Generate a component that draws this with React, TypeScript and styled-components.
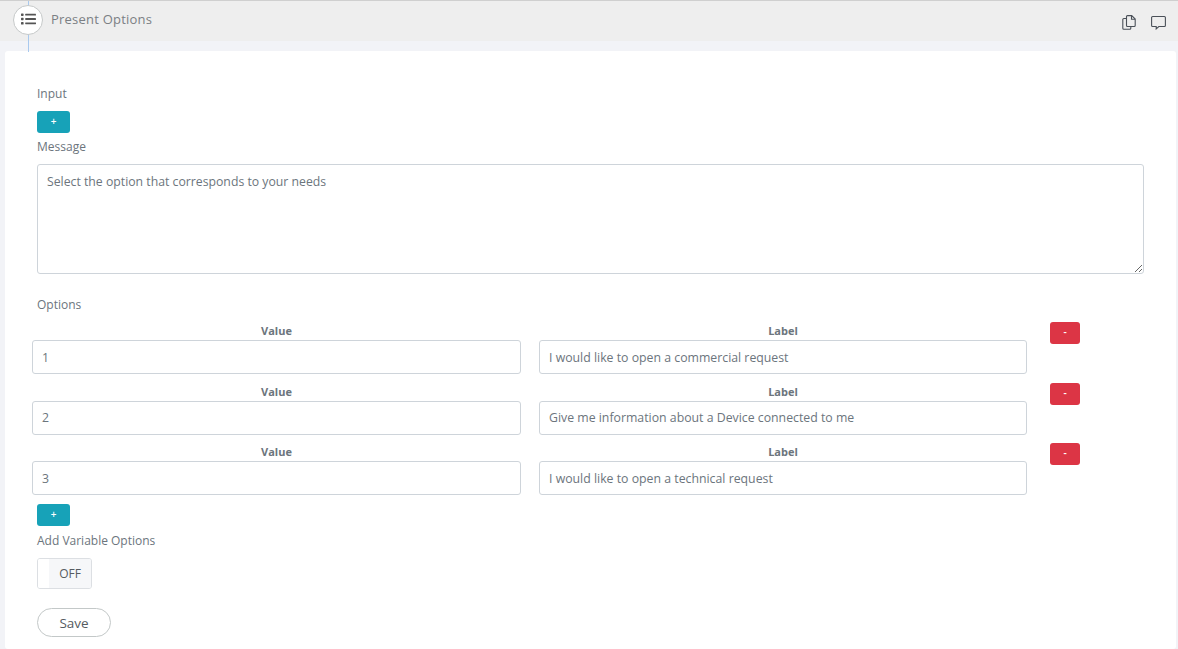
import React from "react";
import styled, { createGlobalStyle } from "styled-components";

const GlobalStyle = createGlobalStyle`
    html, body {
        margin: 0;
        height: 100%;
        overflow: hidden;
        background: #f2f3f7;
        font-family: "Open Sans", "Noto Sans", sans-serif;
        color: #6c757d;
    }
`;

const Header = styled.header`
    position: relative;
    height: 41px;
    box-sizing: border-box;
    border-top: 1px solid #cfcfcf;
    background: #eeeeee;
    display: flex;
    align-items: center;
    padding: 0 12px 5px 51px;
`;

const TimelineLine = styled.div`
    position: absolute;
    left: 28px;
    top: 0;
    width: 1px;
    height: 51px;
    background: #a9c9ee;
`;

const IconCircle = styled.div`
    position: absolute;
    left: 13px;
    top: 4px;
    width: 30px;
    height: 30px;
    box-sizing: border-box;
    padding-bottom: 2px;
    border-radius: 50%;
    border: 1.5px solid #c6c9c9;
    background: #fff;
    display: flex;
    align-items: center;
    justify-content: center;
    color: #555;
`;

const Title = styled.span`
    flex: 1;
    font-size: 13px;
    letter-spacing: 0.22px;
    color: #7b7f84;
`;

const HeaderIcons = styled.div`
    display: flex;
    align-items: center;
    gap: 15px;
    padding-top: 7px;
    color: #4a5058;
`;

const Card = styled.main`
    margin: 10px 2px 0 5px;
    padding: 34px 32px 0;
    background: #fff;
    border-radius: 3px;
    height: 598px;
    box-sizing: border-box;
`;

const FieldLabel = styled.div`
    font-size: 12px;
    line-height: 18px;
    color: #6c757d;
`;

const MessageLabel = styled(FieldLabel)`
    margin-top: 5px;
`;

const AddButton = styled.button<{ $top: number }>`
    display: flex;
    align-items: center;
    justify-content: center;
    width: 33px;
    height: 22px;
    margin-top: ${p => p.$top}px;
    padding: 0 0 2px;
    border: 0;
    border-radius: 3px;
    background: #17a2b8;
    color: #fff;
    font: 600 10px "Open Sans", sans-serif;
`;

const MessageBox = styled.textarea`
    display: block;
    width: 1107px;
    height: 110px;
    margin-top: 8px;
    padding: 8px 9px;
    box-sizing: border-box;
    border: 1px solid #ced4da;
    border-radius: 3px;
    background: #fff;
    color: #6c757d;
    font: 12.25px/18px "Open Sans", sans-serif;
    outline: none;
`;

const OptionsLabel = styled(FieldLabel)`
    margin-top: 22px;
`;

const OptionRows = styled.div`
    margin: 7px 0 0 -5px;
    display: flex;
    flex-direction: column;
    gap: 0.5px;
`;

const OptionRow = styled.div`
    display: grid;
    grid-template-columns: 489px 488px 30px;
    column-gap: 18px;
    height: 60px;
`;

const Column = styled.div`
    display: flex;
    flex-direction: column;
`;

const ColumnTitle = styled.div`
    height: 19px;
    padding-top: 2px;
    box-sizing: border-box;
    text-align: center;
    font-size: 11px;
    font-weight: 700;
    line-height: 16px;
    color: #6c757d;
`;

const TextField = styled.div`
    height: 34px;
    box-sizing: border-box;
    border: 1px solid #ced4da;
    border-radius: 3px;
    padding: 0 9px;
    display: flex;
    align-items: center;
    font-size: 12.3px;
    color: #6c757d;
`;

const RemoveButton = styled.button`
    width: 30px;
    height: 22px;
    margin: 1px 0 0 5px;
    padding: 0 0 2px;
    border: 0;
    border-radius: 3px;
    background: #dc3545;
    color: #fff;
    font: 600 10px "Open Sans", sans-serif;
`;

const VariableLabel = styled(FieldLabel)`
    margin-top: 6px;
`;

const Toggle = styled.div`
    display: flex;
    width: 55px;
    height: 31px;
    margin-top: 8px;
    box-sizing: border-box;
    border: 1px solid #dcdfe3;
    border-radius: 3px;
    overflow: hidden;
`;

const ToggleHandle = styled.div`
    width: 11px;
    background: #fff;
`;

const ToggleState = styled.div`
    flex: 1;
    display: flex;
    align-items: center;
    justify-content: center;
    background: #f6f7f9;
    font-size: 12px;
    color: #555b61;
`;

const SaveButton = styled.button`
    display: block;
    width: 74px;
    height: 29px;
    margin-top: 19px;
    border: 1px solid #c3c8c8;
    border-radius: 15px;
    background: #fff;
    color: #555b61;
    font: 13.5px "Open Sans", sans-serif;
`;

const options = [
    { value: "1", label: "I would like to open a commercial request" },
    { value: "2", label: "Give me information about a Device connected to me" },
    { value: "3", label: "I would like to open a technical request" },
];

export default function App() {
    return (
        <>
            <GlobalStyle />
            <Header>
                <TimelineLine />
                <IconCircle>
                    <svg width="15" height="12" viewBox="0 0 15 12" fill="currentColor">
                        <rect x="0" y="0.5" width="2.6" height="2.4" rx="0.6" />
                        <rect x="0" y="4.8" width="2.6" height="2.4" rx="0.6" />
                        <rect x="0" y="9.1" width="2.6" height="2.4" rx="0.6" />
                        <rect x="4.2" y="0.8" width="10.8" height="1.8" rx="0.4" />
                        <rect x="4.2" y="5.1" width="10.8" height="1.8" rx="0.4" />
                        <rect x="4.2" y="9.4" width="10.8" height="1.8" rx="0.4" />
                    </svg>
                </IconCircle>
                <Title>Present Options</Title>
                <HeaderIcons>
                    <svg width="14" height="15" viewBox="0 0 14 15" fill="none" stroke="currentColor" strokeWidth="1.1">
                        <path d="M4.5 3.5H1.8a1 1 0 0 0-1 1v8.7a1 1 0 0 0 1 1h6a1 1 0 0 0 1-1v-1.7" />
                        <path d="M4.5 1.6a1 1 0 0 1 1-1h4.2l3.5 3.5v6.4a1 1 0 0 1-1 1H5.5a1 1 0 0 1-1-1z" />
                        <path d="M9.5 0.8v3.5h3.5" />
                    </svg>
                    <svg width="15" height="15" viewBox="0 0 15 15" fill="none" stroke="currentColor" strokeWidth="1.1">
                        <path d="M1.6 1.5h11.8a1 1 0 0 1 1 1v8a1 1 0 0 1-1 1H7.8l-2.6 2.4v-2.4H1.6a1 1 0 0 1-1-1v-8a1 1 0 0 1 1-1z" />
                    </svg>
                </HeaderIcons>
            </Header>
            <Card>
                <FieldLabel>Input</FieldLabel>
                <AddButton $top={8}>+</AddButton>
                <MessageLabel>Message</MessageLabel>
                <MessageBox readOnly defaultValue="Select the option that corresponds to your needs" />
                <OptionsLabel>Options</OptionsLabel>
                <OptionRows>
                    {options.map(o => (
                        <OptionRow key={o.value}>
                            <Column>
                                <ColumnTitle>Value</ColumnTitle>
                                <TextField>{o.value}</TextField>
                            </Column>
                            <Column>
                                <ColumnTitle>Label</ColumnTitle>
                                <TextField>{o.label}</TextField>
                            </Column>
                            <RemoveButton>-</RemoveButton>
                        </OptionRow>
                    ))}
                </OptionRows>
                <AddButton $top={2}>+</AddButton>
                <VariableLabel>Add Variable Options</VariableLabel>
                <Toggle>
                    <ToggleHandle />
                    <ToggleState>OFF</ToggleState>
                </Toggle>
                <SaveButton>Save</SaveButton>
            </Card>
        </>
    );
}
